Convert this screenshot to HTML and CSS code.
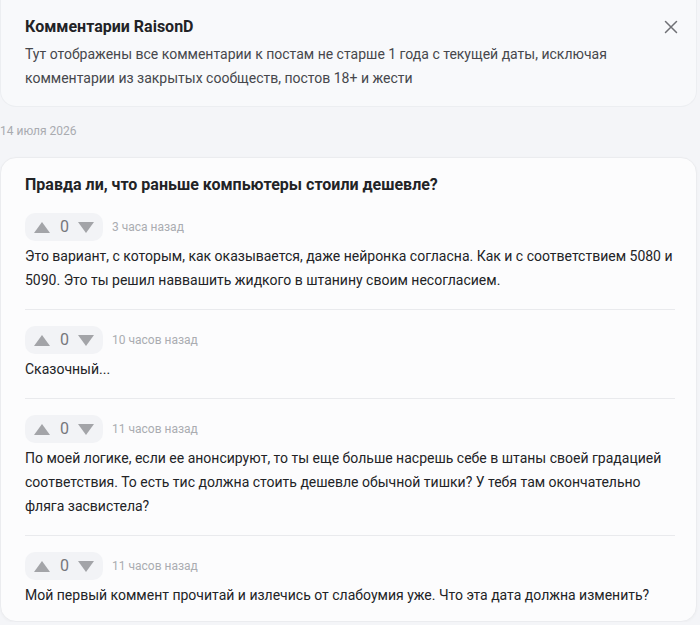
FILE: index.html
```html
<!DOCTYPE html>
<html lang="ru">
<head>
<meta charset="utf-8">
<title>Комментарии RaisonD</title>
<link rel="stylesheet" href="styles.css">
</head>
<body>
<div class="page">
  <section class="notice">
    <div class="notice-head">
      <h1 class="notice-title">Комментарии RaisonD</h1>
      <button class="close" type="button" aria-label="Закрыть">
        <svg width="14" height="14" viewBox="0 0 14 14"><path d="M1.5 1.5 12.5 12.5M12.5 1.5 1.5 12.5" stroke="#6f7075" stroke-width="1.5" fill="none" stroke-linecap="round"/></svg>
      </button>
    </div>
    <p class="notice-text">Тут отображены все комментарии к постам не старше 1 года с текущей даты, исключая комментарии из закрытых сообществ, постов 18+ и жести</p>
  </section>

  <div class="date">14 июля 2026</div>

  <section class="post">
    <h2 class="post-title">Правда ли, что раньше компьютеры стоили дешевле?</h2>

    <article class="comment">
      <div class="meta">
        <div class="votes">
          <span class="tri up"></span><span class="score">0</span><span class="tri down"></span>
        </div>
        <span class="time">3 часа назад</span>
      </div>
      <p class="body">Это вариант, с которым, как оказывается, даже нейронка согласна. Как и с соответствием 5080 и 5090. Это ты решил наввашить жидкого в штанину своим несогласием.</p>
    </article>

    <article class="comment">
      <div class="meta">
        <div class="votes">
          <span class="tri up"></span><span class="score">0</span><span class="tri down"></span>
        </div>
        <span class="time">10 часов назад</span>
      </div>
      <p class="body">Сказочный...</p>
    </article>

    <article class="comment">
      <div class="meta">
        <div class="votes">
          <span class="tri up"></span><span class="score">0</span><span class="tri down"></span>
        </div>
        <span class="time">11 часов назад</span>
      </div>
      <p class="body">По моей логике, если ее анонсируют, то ты еще больше насрешь себе в штаны своей градацией соответствия. То есть тис должна стоить дешевле обычной тишки? У тебя там окончательно фляга засвистела?</p>
    </article>

    <article class="comment">
      <div class="meta">
        <div class="votes">
          <span class="tri up"></span><span class="score">0</span><span class="tri down"></span>
        </div>
        <span class="time">11 часов назад</span>
      </div>
      <p class="body">Мой первый коммент прочитай и излечись от слабоумия уже. Что эта дата должна изменить?</p>
    </article>
  </section>
</div>
</body>
</html>
```

FILE: styles.css
```css
* { box-sizing: border-box; }

html, body {
  margin: 0;
  padding: 0;
  background: #f4f5f8;
}

body {
  font-family: Roboto, "Noto Sans", Arial, sans-serif;
  color: #222326;
  font-size: 14px;
  line-height: 24px;
}

.page {
  width: 697px;
  display: flex;
  flex-direction: column;
}

/* info banner */
.notice {
  background: #f8f9fb;
  border: 1px solid #eceef1;
  border-top: none;
  border-radius: 0 0 16px 16px;
  padding: 15px 24px 16px;
}

.notice-head {
  display: flex;
  justify-content: space-between;
  align-items: center;
}

.notice-title {
  margin: 0;
  font-size: 16px;
  font-weight: 700;
  line-height: 24px;
  color: #222326;
}

.close {
  border: 0;
  background: none;
  padding: 0;
  margin-right: -6px;
  width: 14px;
  height: 14px;
  display: flex;
  cursor: pointer;
}

.notice-text {
  margin: 3px 0 0;
  color: #46474c;
  font-size: 14px;
  line-height: 24px;
}

.date {
  padding: 12px 0 14px;
  font-size: 12px;
  line-height: 24px;
  color: #a9abb0;
}

/* post card with comments */
.post {
  background: #fcfcfd;
  border: 1px solid #ebecef;
  border-radius: 16px;
  box-shadow: 0 1px 3px rgba(0, 0, 0, 0.03);
  padding: 15px 21px 14px 24px;
}

.post-title {
  margin: 0 0 16px;
  font-size: 16px;
  font-weight: 700;
  line-height: 24px;
  color: #222326;
}

.comment {
  padding: 16px 0 17px;
  border-top: 1px solid #e9eaed;
}

.comment:first-of-type {
  border-top: none;
  padding-top: 0;
}

.comment:last-of-type {
  padding-bottom: 0;
}

.meta {
  display: flex;
  align-items: center;
  gap: 9px;
  margin-bottom: 3px;
}

.votes {
  display: flex;
  align-items: center;
  gap: 10px;
  height: 28px;
  padding: 0 9px;
  background: #f2f3f6;
  border-radius: 10px;
}

.tri {
  width: 0;
  height: 0;
  border-left: 8.5px solid transparent;
  border-right: 8.5px solid transparent;
}

.tri.up { border-bottom: 11px solid #a3a4a8; }
.tri.down { border-top: 11px solid #a3a4a8; }

.score {
  font-size: 16px;
  line-height: 20px;
  color: #76777c;
  width: 8px;
  text-align: center;
}

.time {
  font-size: 12px;
  color: #aaacb1;
}

.body {
  margin: 0;
  font-size: 14px;
  line-height: 24px;
  color: #222326;
}
```
